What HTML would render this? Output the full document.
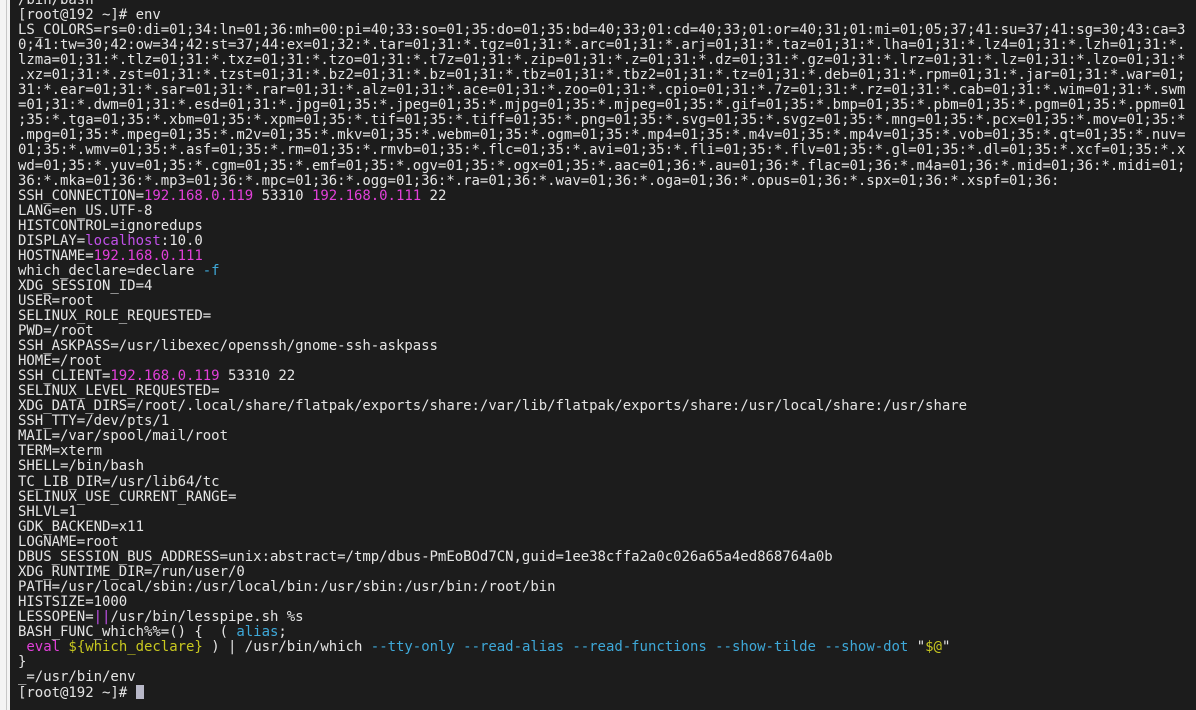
<!DOCTYPE html>
<html><head><meta charset="utf-8"><style>
html,body{margin:0;padding:0;width:1196px;height:710px;overflow:hidden;background:#1c1c1c;}
.strip{position:absolute;left:0;top:0;width:10px;height:710px;background:#f4f4f4;}
.strip:after{content:"";position:absolute;left:6px;top:0;width:1px;height:710px;background:#c8c8c8;}
pre{position:absolute;left:18px;top:-7px;margin:0;font-family:"DejaVu Sans Mono","Liberation Mono",monospace;font-size:14px;line-height:15.04px;color:#e4e4e4;white-space:pre;letter-spacing:-0.03px;}
.m{color:#e040d8}.p{color:#c050e8}.b{color:#3ea8d8}.y{color:#c8c820}
.cur{display:inline-block;width:8px;height:14px;background:#b8b8c8;vertical-align:-2px;}
</style></head><body>
<div class="strip"></div>
<pre>/bin/bash
[root@192 ~]# env
LS_COLORS=rs=0:di=01;34:ln=01;36:mh=00:pi=40;33:so=01;35:do=01;35:bd=40;33;01:cd=40;33;01:or=40;31;01:mi=01;05;37;41:su=37;41:sg=30;43:ca=3
0;41:tw=30;42:ow=34;42:st=37;44:ex=01;32:*.tar=01;31:*.tgz=01;31:*.arc=01;31:*.arj=01;31:*.taz=01;31:*.lha=01;31:*.lz4=01;31:*.lzh=01;31:*.
lzma=01;31:*.tlz=01;31:*.txz=01;31:*.tzo=01;31:*.t7z=01;31:*.zip=01;31:*.z=01;31:*.dz=01;31:*.gz=01;31:*.lrz=01;31:*.lz=01;31:*.lzo=01;31:*
.xz=01;31:*.zst=01;31:*.tzst=01;31:*.bz2=01;31:*.bz=01;31:*.tbz=01;31:*.tbz2=01;31:*.tz=01;31:*.deb=01;31:*.rpm=01;31:*.jar=01;31:*.war=01;
31:*.ear=01;31:*.sar=01;31:*.rar=01;31:*.alz=01;31:*.ace=01;31:*.zoo=01;31:*.cpio=01;31:*.7z=01;31:*.rz=01;31:*.cab=01;31:*.wim=01;31:*.swm
=01;31:*.dwm=01;31:*.esd=01;31:*.jpg=01;35:*.jpeg=01;35:*.mjpg=01;35:*.mjpeg=01;35:*.gif=01;35:*.bmp=01;35:*.pbm=01;35:*.pgm=01;35:*.ppm=01
;35:*.tga=01;35:*.xbm=01;35:*.xpm=01;35:*.tif=01;35:*.tiff=01;35:*.png=01;35:*.svg=01;35:*.svgz=01;35:*.mng=01;35:*.pcx=01;35:*.mov=01;35:*
.mpg=01;35:*.mpeg=01;35:*.m2v=01;35:*.mkv=01;35:*.webm=01;35:*.ogm=01;35:*.mp4=01;35:*.m4v=01;35:*.mp4v=01;35:*.vob=01;35:*.qt=01;35:*.nuv=
01;35:*.wmv=01;35:*.asf=01;35:*.rm=01;35:*.rmvb=01;35:*.flc=01;35:*.avi=01;35:*.fli=01;35:*.flv=01;35:*.gl=01;35:*.dl=01;35:*.xcf=01;35:*.x
wd=01;35:*.yuv=01;35:*.cgm=01;35:*.emf=01;35:*.ogv=01;35:*.ogx=01;35:*.aac=01;36:*.au=01;36:*.flac=01;36:*.m4a=01;36:*.mid=01;36:*.midi=01;
36:*.mka=01;36:*.mp3=01;36:*.mpc=01;36:*.ogg=01;36:*.ra=01;36:*.wav=01;36:*.oga=01;36:*.opus=01;36:*.spx=01;36:*.xspf=01;36:
SSH_CONNECTION=<span class="m">192.168.0.119</span> 53310 <span class="m">192.168.0.111</span> 22
LANG=en_US.UTF-8
HISTCONTROL=ignoredups
DISPLAY=<span class="p">localhost</span>:10.0
HOSTNAME=<span class="m">192.168.0.111</span>
which_declare=declare <span class="b">-f</span>
XDG_SESSION_ID=4
USER=root
SELINUX_ROLE_REQUESTED=
PWD=/root
SSH_ASKPASS=/usr/libexec/openssh/gnome-ssh-askpass
HOME=/root
SSH_CLIENT=<span class="m">192.168.0.119</span> 53310 22
SELINUX_LEVEL_REQUESTED=
XDG_DATA_DIRS=/root/.local/share/flatpak/exports/share:/var/lib/flatpak/exports/share:/usr/local/share:/usr/share
SSH_TTY=/dev/pts/1
MAIL=/var/spool/mail/root
TERM=xterm
SHELL=/bin/bash
TC_LIB_DIR=/usr/lib64/tc
SELINUX_USE_CURRENT_RANGE=
SHLVL=1
GDK_BACKEND=x11
LOGNAME=root
DBUS_SESSION_BUS_ADDRESS=unix:abstract=/tmp/dbus-PmEoBOd7CN,guid=1ee38cffa2a0c026a65a4ed868764a0b
XDG_RUNTIME_DIR=/run/user/0
PATH=/usr/local/sbin:/usr/local/bin:/usr/sbin:/usr/bin:/root/bin
HISTSIZE=1000
LESSOPEN=<span class="p">||</span>/usr/bin/lesspipe.sh %s
BASH_FUNC_which%%=() {  ( <span class="b">alias</span>;
 <span class="m">eval</span> <span class="y">${which_declare}</span> ) | /usr/bin/which <span class="b">--tty-only --read-alias --read-functions --show-tilde --show-dot</span> "<span class="y">$@</span>"
}
_=/usr/bin/env
[root@192 ~]# <span class="cur"></span></pre>
</body></html>
